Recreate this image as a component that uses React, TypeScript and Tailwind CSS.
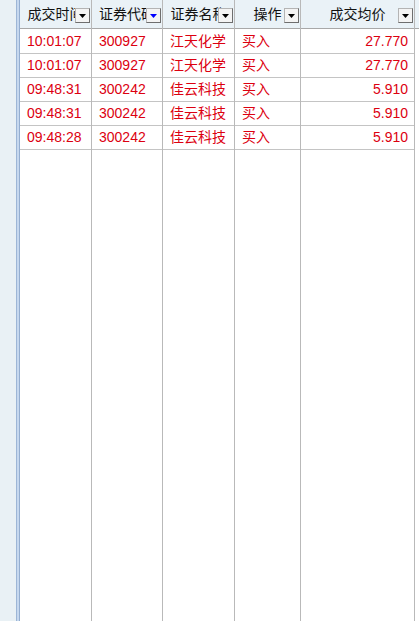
import React from "react"

type Col = {
  title: string
  width: string
  align: "left" | "right"
  blue?: boolean
}

const cols: Col[] = [
  { title: "成交时间", width: "w-[72px]", align: "left" },
  { title: "证券代码", width: "w-[71px]", align: "left", blue: true },
  { title: "证券名称", width: "w-[72px]", align: "left" },
  { title: "操作", width: "w-[66px]", align: "left" },
  { title: "成交均价", width: "w-[114px]", align: "right" },
]

const rows = [
  ["10:01:07", "300927", "江天化学", "买入", "27.770"],
  ["10:01:07", "300927", "江天化学", "买入", "27.770"],
  ["09:48:31", "300242", "佳云科技", "买入", "5.910"],
  ["09:48:31", "300242", "佳云科技", "买入", "5.910"],
  ["09:48:28", "300242", "佳云科技", "买入", "5.910"],
]

const font = "font-['Liberation_Sans','Noto_Sans_CJK_SC',sans-serif]"

function DropButton({ blue }: { blue?: boolean }) {
  return (
    <div className="absolute right-[1px] top-[8px] w-[15px] h-[15px] bg-[#f4f4f4] border border-[#b4b4b4] border-r-[#6e6e6e] border-b-[#6e6e6e] flex items-center justify-center">
      <svg width="7" height="4" viewBox="0 0 7 4">
        <polygon points="0,0 7,0 3.5,4" fill={blue ? "#0000ff" : "#000000"} />
      </svg>
    </div>
  )
}

export default function App() {
  return (
    <div className={`w-[419px] h-[621px] flex bg-white overflow-hidden ${font}`}>
      {/* left strip */}
      <div className="w-[16px] h-full bg-[#e9f1f5]" />
      <div className="w-[1px] h-full bg-[#9db6d6]" />
      <div className="w-[2px] h-full bg-[#c6d8ee]" />
      <div className="w-[1px] h-full bg-[#94aed0]" />

      {cols.map((c, ci) => (
        <div key={ci} className={`${c.width} h-full flex flex-col border-r border-[#b9b9b9]`}>
          <div className="relative h-[29px] shrink-0 bg-[#eaf2f7] border-b border-[#a8a8a8] flex items-center justify-center overflow-hidden whitespace-nowrap text-[14px] text-[#111]">
            <span>{c.title}</span>
            <DropButton blue={c.blue} />
          </div>
          <div className="pt-[1px] flex flex-col">
            {rows.map((r, ri) => (
              <div
                key={ri}
                className={`h-[24px] border-b border-[#c4c4c4] flex items-center whitespace-nowrap overflow-hidden text-[14px] text-[#dc0010] ${
                  c.align === "right" ? "justify-end pr-[6px]" : "pl-[7px]"
                }`}
              >
                {r[ci]}
              </div>
            ))}
          </div>
        </div>
      ))}

      <div className="flex-1 h-full flex flex-col">
        <div className="h-[29px] shrink-0 bg-[#eaf2f7] border-b border-[#a8a8a8]" />
      </div>
    </div>
  )
}
